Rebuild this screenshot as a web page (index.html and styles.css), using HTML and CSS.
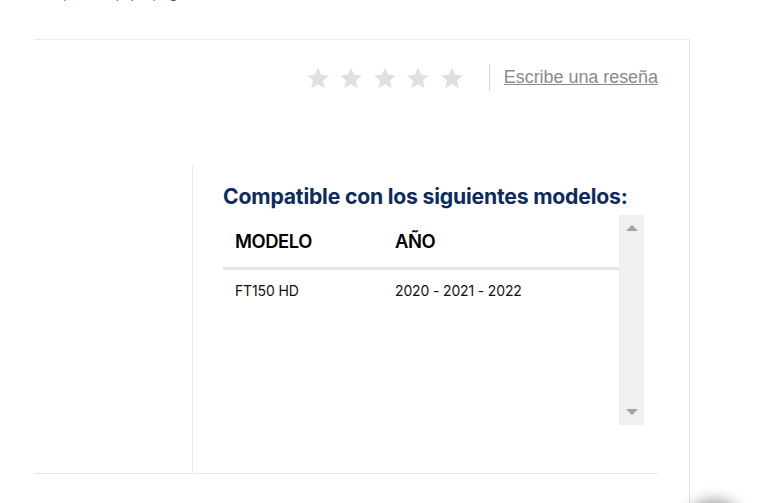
FILE: index.html
```html
<!DOCTYPE html>
<html lang="es">

<head>
    <meta charset="UTF-8">
    <meta name="viewport" content="width=device-width, initial-scale=1.0">
    <title>Compatibilidad</title>
    <link rel="stylesheet" href="styles.css">
</head>

<body>
    <div class="top-strip">
        <span class="top-text">Compra aquí, paga cómoda</span>
    </div>

    <div class="card">
        <div class="rating">
            <div class="stars">
                <svg class="star" viewBox="0 0 24 24"><path d="M12 1.5l3.1 7.2 7.8.7-5.9 5.2 1.8 7.7L12 18.2l-6.8 4.1 1.8-7.7-5.9-5.2 7.8-.7z"/></svg>
                <svg class="star" viewBox="0 0 24 24"><path d="M12 1.5l3.1 7.2 7.8.7-5.9 5.2 1.8 7.7L12 18.2l-6.8 4.1 1.8-7.7-5.9-5.2 7.8-.7z"/></svg>
                <svg class="star" viewBox="0 0 24 24"><path d="M12 1.5l3.1 7.2 7.8.7-5.9 5.2 1.8 7.7L12 18.2l-6.8 4.1 1.8-7.7-5.9-5.2 7.8-.7z"/></svg>
                <svg class="star" viewBox="0 0 24 24"><path d="M12 1.5l3.1 7.2 7.8.7-5.9 5.2 1.8 7.7L12 18.2l-6.8 4.1 1.8-7.7-5.9-5.2 7.8-.7z"/></svg>
                <svg class="star" viewBox="0 0 24 24"><path d="M12 1.5l3.1 7.2 7.8.7-5.9 5.2 1.8 7.7L12 18.2l-6.8 4.1 1.8-7.7-5.9-5.2 7.8-.7z"/></svg>
            </div>
            <a class="review-link" href="#">Escribe una reseña</a>
        </div>

        <div class="compat">
            <div class="compat-side"></div>
            <div class="compat-main">
                <h2>Compatible con los siguientes modelos:</h2>
                <div class="table-box">
                    <table class="models">
                        <thead>
                            <tr>
                                <th class="col-model">MODELO</th>
                                <th>AÑO</th>
                            </tr>
                        </thead>
                        <tbody>
                            <tr>
                                <td>FT150 HD</td>
                                <td>2020 - 2021 - 2022</td>
                            </tr>
                        </tbody>
                    </table>
                    <div class="scrollbar">
                        <span class="arrow up"></span>
                        <span class="arrow down"></span>
                    </div>
                </div>
            </div>
        </div>
    </div>

    <div class="float-btn"></div>
</body>

</html>
```

FILE: styles.css
```css
body {
    font-family: Inter, "Liberation Sans", sans-serif;
    margin: 0;
    background-color: #fff;
    height: 503px;
    overflow: hidden;
    position: relative;
}

.top-strip {
    height: 3px;
    overflow: hidden;
    padding-left: 32px;
}

.top-text {
    display: block;
    margin-top: -14px;
    font-size: 14px;
    line-height: 14px;
    color: #4a3a9a;
    white-space: nowrap;
    word-spacing: 14px;
}

.card {
    margin-left: 34px;
    margin-top: 36px;
    width: 655px;
    border-top: 1px solid #ececec;
    border-right: 1px solid #e4e4e4;
    padding-top: 24px;
    height: 600px;
}

.rating {
    display: flex;
    justify-content: flex-end;
    align-items: center;
    padding-right: 31px;
    height: 27px;
}

.stars {
    display: flex;
    gap: 9.5px;
    margin-right: 25px;
}

.star {
    width: 24px;
    height: 24px;
    fill: #dde1e6;
}

.review-link {
    font-family: "Liberation Sans", Arial, sans-serif;
    font-size: 18px;
    color: #8a8a8a;
    border-left: 1px solid #d6d6d6;
    padding-left: 14px;
    line-height: 27px;
    letter-spacing: -0.05px;
}

.compat {
    display: flex;
    margin-top: 74px;
    width: 624px;
    border-bottom: 1px solid #e6e6e6;
}

.compat-side {
    width: 158px;
    border-right: 1px solid #e9e9e9;
}

.compat-main {
    padding: 19px 0 48px 30px;
}

h2 {
    margin: 0 0 6px;
    font-size: 21.2px;
    line-height: 25px;
    font-weight: 700;
    color: #0d2b5e;
    letter-spacing: -0.2px;
}

.table-box {
    display: flex;
    width: 421px;
    height: 210px;
}

.models {
    width: 396px;
    border-collapse: collapse;
    align-self: flex-start;
}

.models th {
    text-align: left;
    font-size: 18.4px;
    font-weight: 600;
    color: #000;
    height: 51px;
    padding: 0 0 1px 12px;
    border-bottom: 3px solid #e4e4e4;
    letter-spacing: -0.45px;
}

.models th.col-model {
    width: 148px;
}

.models td {
    font-size: 14px;
    color: #111;
    padding: 10px 0 0 12px;
    height: 20px;
    letter-spacing: -0.15px;
}

.scrollbar {
    width: 25px;
    background-color: #f0f0f0;
    display: flex;
    flex-direction: column;
    justify-content: space-between;
    align-items: center;
    padding: 10px 0;
    box-sizing: border-box;
}

.arrow {
    width: 0;
    height: 0;
    border-left: 6px solid transparent;
    border-right: 6px solid transparent;
}

.arrow.up {
    border-bottom: 6px solid #a3a3a3;
}

.arrow.down {
    border-top: 6px solid #a3a3a3;
}

.float-btn {
    position: absolute;
    left: 686px;
    top: 504px;
    width: 56px;
    height: 56px;
    border-radius: 50%;
    background-color: #fff;
    box-shadow: 0 0 14px 4px rgba(0, 0, 0, 0.4);
}
```
